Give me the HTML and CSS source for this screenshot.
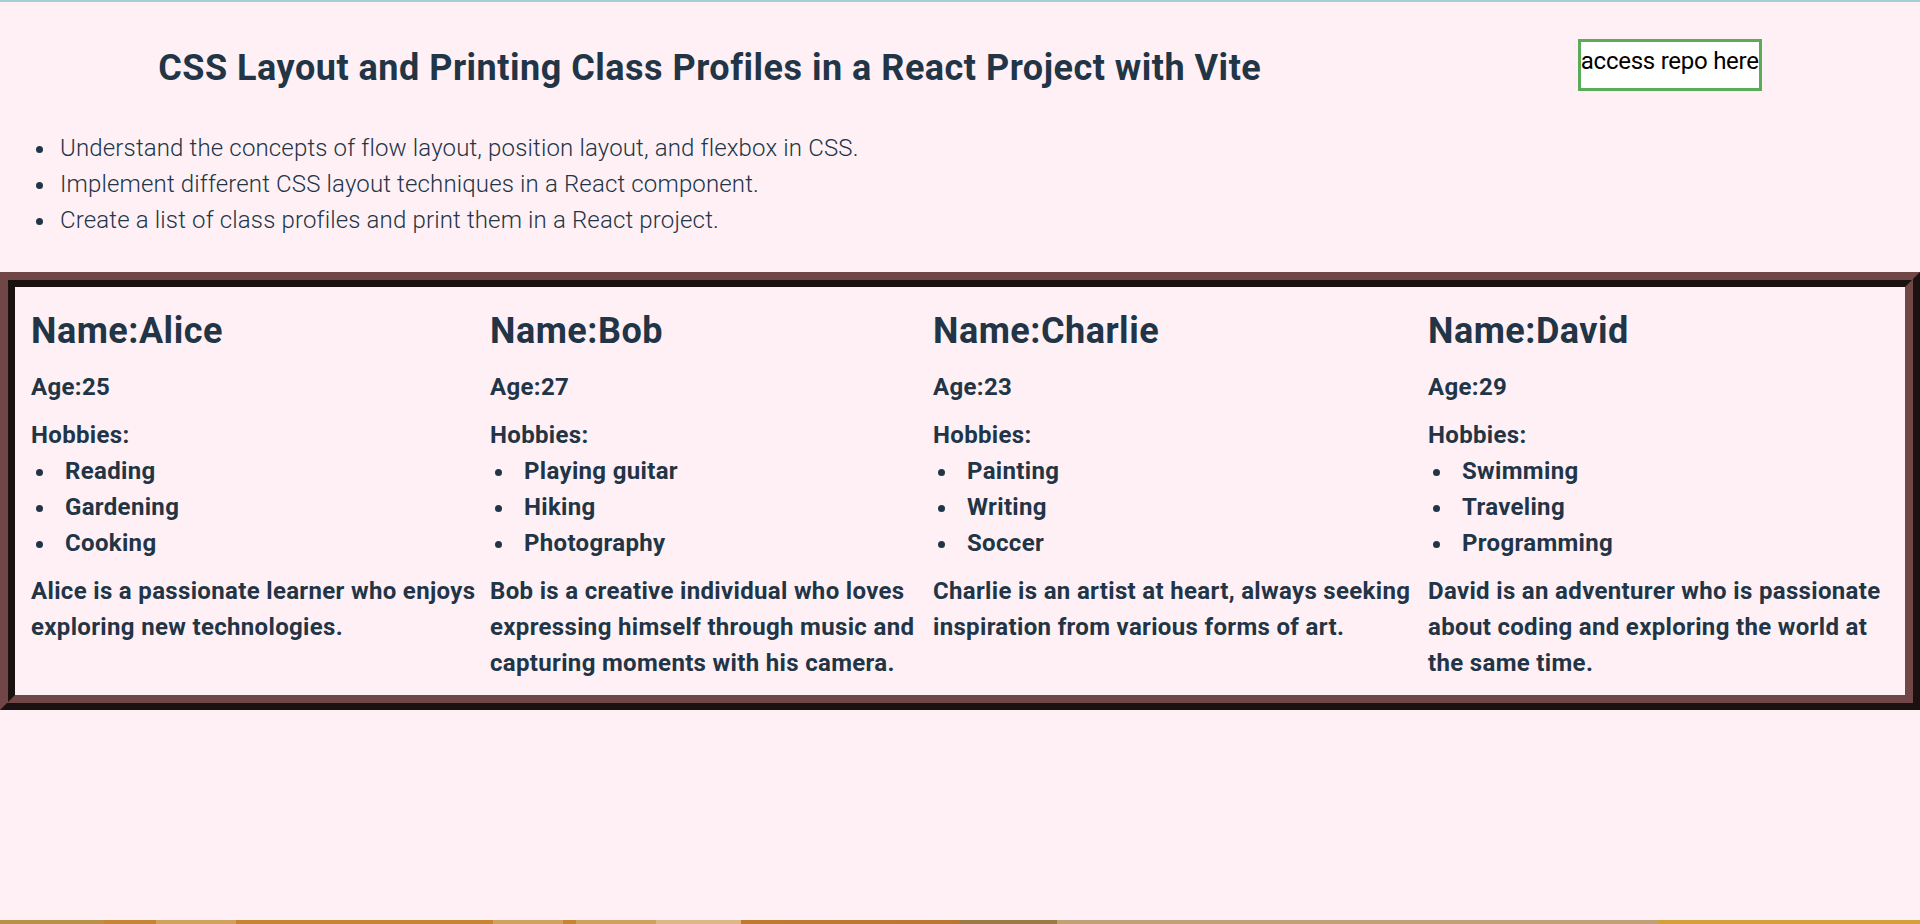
FILE: index.html
```html
<!DOCTYPE html>
<html lang="en">
<head>
<meta charset="utf-8">
<title>CSS Layout and Printing Class Profiles</title>
<link rel="stylesheet" href="styles.css">
</head>
<body>
  <header class="top">
    <h2 class="title">CSS Layout and Printing Class Profiles in a React Project with Vite</h2>
    <a class="repo" href="#">access repo here</a>
  </header>
  <ul class="goals">
    <li>Understand the concepts of flow layout, position layout, and flexbox in CSS.</li>
    <li>Implement different CSS layout techniques in a React component.</li>
    <li>Create a list of class profiles and print them in a React project.</li>
  </ul>
  <section class="profiles">
    <div class="card">
      <h2 class="name">Name:Alice</h2>
      <p class="age">Age:25</p>
      <p class="label">Hobbies:</p>
      <ul class="hobbies">
        <li>Reading</li>
        <li>Gardening</li>
        <li>Cooking</li>
      </ul>
      <p class="desc">Alice is a passionate learner who enjoys exploring new technologies.</p>
    </div>
    <div class="card">
      <h2 class="name">Name:Bob</h2>
      <p class="age">Age:27</p>
      <p class="label">Hobbies:</p>
      <ul class="hobbies">
        <li>Playing guitar</li>
        <li>Hiking</li>
        <li>Photography</li>
      </ul>
      <p class="desc">Bob is a creative individual who loves expressing himself through music and capturing moments with his camera.</p>
    </div>
    <div class="card">
      <h2 class="name">Name:Charlie</h2>
      <p class="age">Age:23</p>
      <p class="label">Hobbies:</p>
      <ul class="hobbies">
        <li>Painting</li>
        <li>Writing</li>
        <li>Soccer</li>
      </ul>
      <p class="desc">Charlie is an artist at heart, always seeking inspiration from various forms of art.</p>
    </div>
    <div class="card">
      <h2 class="name">Name:David</h2>
      <p class="age">Age:29</p>
      <p class="label">Hobbies:</p>
      <ul class="hobbies">
        <li>Swimming</li>
        <li>Traveling</li>
        <li>Programming</li>
      </ul>
      <p class="desc">David is an adventurer who is passionate about coding and exploring the world at the same time.</p>
    </div>
  </section>
</body>
</html>
```
FILE: styles.css
```css
html {
  background: linear-gradient(to right,
    #b89048 0, #b89048 104px,
    #c48534 104px, #c48534 156px,
    #d0a25e 156px, #d0a25e 236px,
    #c58532 236px, #c58532 493px,
    #d2a060 493px, #d2a060 563px,
    #c58532 563px, #c58532 576px,
    #d0a060 576px, #d0a060 656px,
    #dcb888 656px, #dcb888 741px,
    #c07a30 741px, #b97632 960px,
    #9b7a48 960px, #9b7a48 1057px,
    #c0a078 1057px, #c0a078 1658px,
    #d4a03a 1658px, #d4a03a 1920px);
}

body {
  margin: 0;
  min-height: 920px;
  box-sizing: border-box;
  border-top: 2px solid #a6cfd3;
  background: #fff0f5;
  color: #213547;
  font-family: Roboto, "Noto Sans", sans-serif;
  font-size: 24px;
  line-height: 1.5;
}

.top {
  display: flex;
  justify-content: space-around;
  align-items: center;
  padding-top: 36px;
}

.title {
  margin: 3px 0 -3px;
  font-size: 36px;
  font-weight: 700;
  letter-spacing: 0.5px;
}

.repo {
  display: block;
  background: #ffffff;
  border: 3px solid #5aac5a;
  color: #000000;
  text-decoration: none;
  font-size: 24px;
  font-weight: 400;
  letter-spacing: -0.25px;
  padding: 1px 0 9px;
  line-height: 36px;
}

.goals {
  margin: 38px 0 0;
  padding-left: 57px;
  font-weight: 300;
  letter-spacing: 0.15px;
}

.goals li {
  padding-left: 3px;
}

.profiles {
  margin-top: 34px;
  border: 15px ridge #704646;
  display: grid;
  grid-template-columns: 459px 443px 495px 1fr;
  padding: 17px 0 14px 16px;
  font-weight: 700;
  letter-spacing: 0.33px;
}

.card {
  padding-right: 10px;
}

.name {
  margin: 0 0 11px;
  font-size: 36px;
  letter-spacing: 0.5px;
}

.age {
  margin: 0 0 12px;
}

.label {
  margin: 0;
}

.hobbies {
  margin: 0 0 12px;
  padding-left: 26px;
}

.hobbies li {
  padding-left: 8px;
}

.desc {
  margin: 0;
}
```
